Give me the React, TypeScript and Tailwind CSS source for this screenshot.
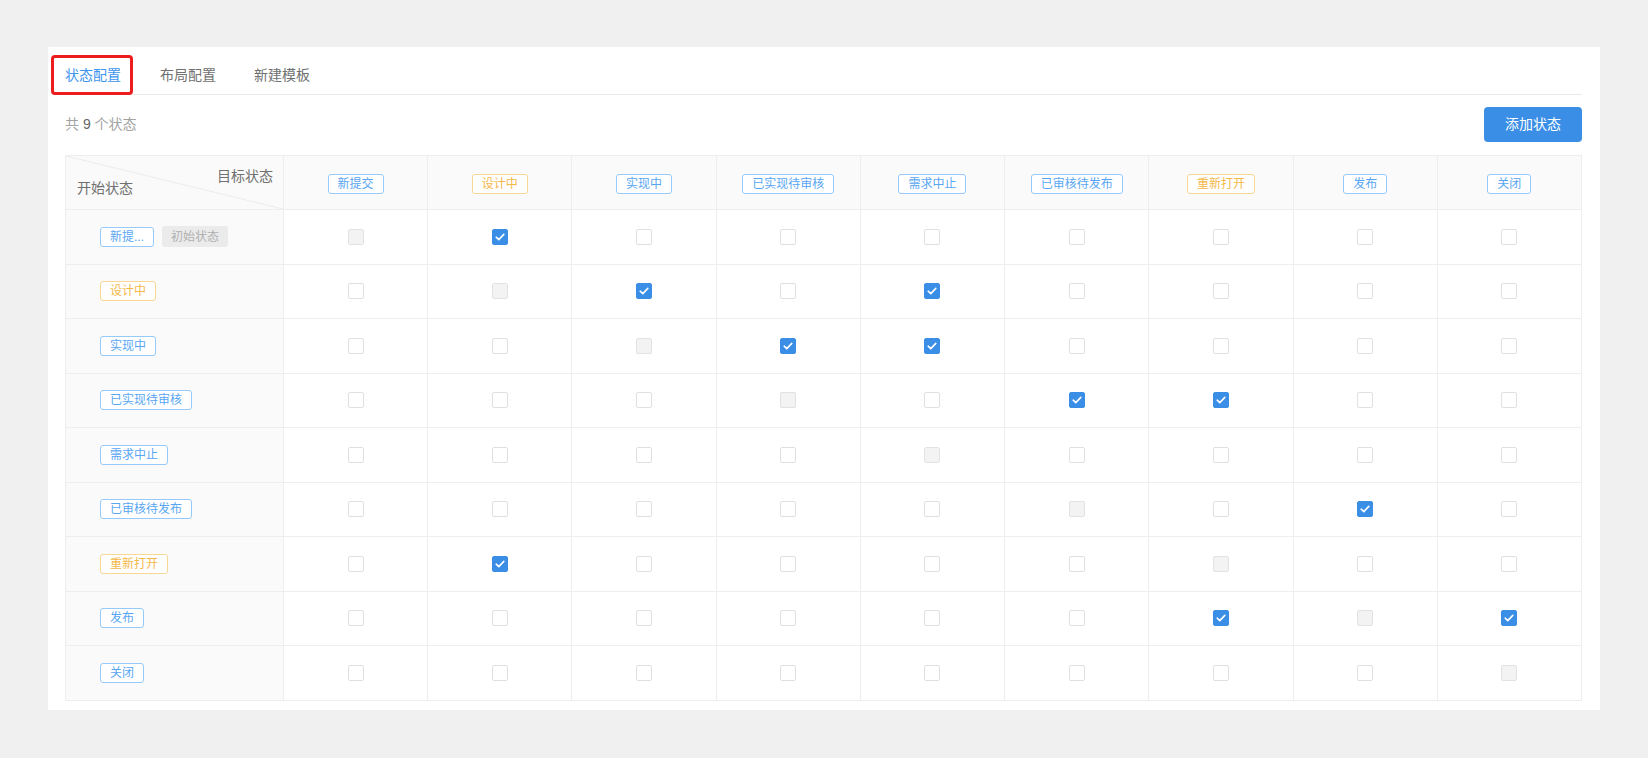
import { useState } from "react";

type Tone = "blue" | "amber";

type Status = {
  name: string;
  label?: string;
  tone: Tone;
  initial?: boolean;
};

const STATUSES: Status[] = [
  { name: "新提交", label: "新提...", tone: "blue", initial: true },
  { name: "设计中", tone: "amber" },
  { name: "实现中", tone: "blue" },
  { name: "已实现待审核", tone: "blue" },
  { name: "需求中止", tone: "blue" },
  { name: "已审核待发布", tone: "blue" },
  { name: "重新打开", tone: "amber" },
  { name: "发布", tone: "blue" },
  { name: "关闭", tone: "blue" },
];

// allowed transitions: from row index -> target column indexes
const TRANSITIONS: number[][] = [[1], [2, 4], [3, 4], [5, 6], [], [7], [1], [6, 8], []];

const TABS = ["状态配置", "布局配置", "新建模板"];

function Tag({ tone, children }: { tone: Tone; children: string }) {
  const cls =
    tone === "amber"
      ? "border-[#f7d793] text-[#f4b84a]"
      : "border-[#96cafb] text-[#58a6f2]";
  return (
    <span
      className={`inline-flex h-[20px] items-center rounded-[3px] border bg-white px-[9px] text-[12px] leading-none ${cls}`}
    >
      {children}
    </span>
  );
}

function Checkbox({ checked, disabled, onToggle }: { checked: boolean; disabled: boolean; onToggle: () => void }) {
  if (disabled) {
    return <span className="block h-[16px] w-[16px] rounded-[2px] border border-[#e2e2e2] bg-[#f3f3f3]" />;
  }
  return (
    <button
      type="button"
      onClick={onToggle}
      className={`flex h-[16px] w-[16px] items-center justify-center rounded-[2px] border ${
        checked ? "border-[#3a8ee6] bg-[#3a8ee6]" : "border-[#e0e0e0] bg-white"
      }`}
    >
      {checked ? (
        <svg width="10" height="8" viewBox="0 0 10 8" fill="none">
          <path d="M1.2 4.2 3.8 6.6 8.8 1.4" stroke="white" strokeWidth="1.6" strokeLinecap="round" strokeLinejoin="round" />
        </svg>
      ) : null}
    </button>
  );
}

export default function App() {
  const [activeTab, setActiveTab] = useState(0);
  const [matrix, setMatrix] = useState<boolean[][]>(() =>
    STATUSES.map((_, r) => STATUSES.map((__, c) => TRANSITIONS[r].includes(c))),
  );

  function toggle(r: number, c: number) {
    setMatrix((prev) => prev.map((row, ri) => (ri === r ? row.map((v, ci) => (ci === c ? !v : v)) : row)));
  }

  return (
    <div
      className="min-h-[758px] bg-[#f0f0f0] pl-[48px] pr-[48px] pt-[47px]"
      style={{ fontFamily: '"Liberation Sans", "Noto Sans CJK SC", sans-serif' }}
    >
      <div className="h-[663px] bg-white pl-[17px] pr-[18px] pt-[8px]">
        <div className="flex h-[40px] border-b border-[#e8e8e8]">
          {TABS.map((tab, i) => (
            <button
              key={tab}
              type="button"
              onClick={() => setActiveTab(i)}
              className={`relative h-[40px] text-[14px] leading-[38px] ${i === 0 ? "pr-[20px]" : "px-[19px]"} ${
                activeTab === i ? "text-[#3d95ee]" : "text-[#707070]"
              }`}
            >
              {tab}
              {i === 0 ? (
                <span className="pointer-events-none absolute -left-[14px] -top-[0px] h-[40px] w-[82px] rounded-[4px] border-[3px] border-[#ee1d1d]" />
              ) : null}
            </button>
          ))}
        </div>

        <div className="mt-[12px] flex h-[35px] items-center justify-between">
          <p className="text-[14px] text-[#a3a3a3]">
            共 <span className="text-[#666]">9</span> 个状态
          </p>
          <button
            type="button"
            className="h-[35px] w-[98px] rounded-[4px] bg-[#3a8ee6] text-[14px] text-white"
          >
            添加状态
          </button>
        </div>

        <table className="mt-[13px] w-full table-fixed border-collapse border border-[#eeeeee]">
          <colgroup>
            <col className="w-[218px]" />
            {STATUSES.map((s) => (
              <col key={s.name} />
            ))}
          </colgroup>
          <thead>
            <tr className="h-[54px] bg-[#fafafa]">
              <th className="relative border border-[#eeeeee] p-0 font-normal">
                <svg className="absolute inset-0 h-full w-full" preserveAspectRatio="none" viewBox="0 0 100 100">
                  <line x1="0" y1="0" x2="100" y2="100" stroke="#ececec" strokeWidth="1" vectorEffect="non-scaling-stroke" />
                </svg>
                <span className="absolute right-[10px] top-[10px] text-[14px] leading-[20px] text-[#707070]">目标状态</span>
                <span className="absolute left-[11px] top-[22px] text-[14px] leading-[20px] text-[#707070]">开始状态</span>
              </th>
              {STATUSES.map((s) => (
                <th key={s.name} className="border border-[#eeeeee] p-0 text-center font-normal">
                  <Tag tone={s.tone}>{s.name}</Tag>
                </th>
              ))}
            </tr>
          </thead>
          <tbody>
            {STATUSES.map((s, r) => (
              <tr key={s.name} className="h-[54.5px]">
                <td className="border border-[#eeeeee] bg-[#fafafa] p-0 pl-[34px]">
                  <div className="flex items-center gap-[8px]">
                    <Tag tone={s.tone}>{s.label ?? s.name}</Tag>
                    {s.initial ? (
                      <span className="inline-flex h-[21px] items-center rounded-[3px] bg-[#ebebeb] px-[9px] text-[12px] leading-none text-[#b0b0b0]">
                        初始状态
                      </span>
                    ) : null}
                  </div>
                </td>
                {STATUSES.map((t, c) => (
                  <td key={t.name} className="border border-[#eeeeee] p-0">
                    <div className="flex justify-center">
                      <Checkbox checked={matrix[r][c]} disabled={r === c} onToggle={() => toggle(r, c)} />
                    </div>
                  </td>
                ))}
              </tr>
            ))}
          </tbody>
        </table>
      </div>
    </div>
  );
}
